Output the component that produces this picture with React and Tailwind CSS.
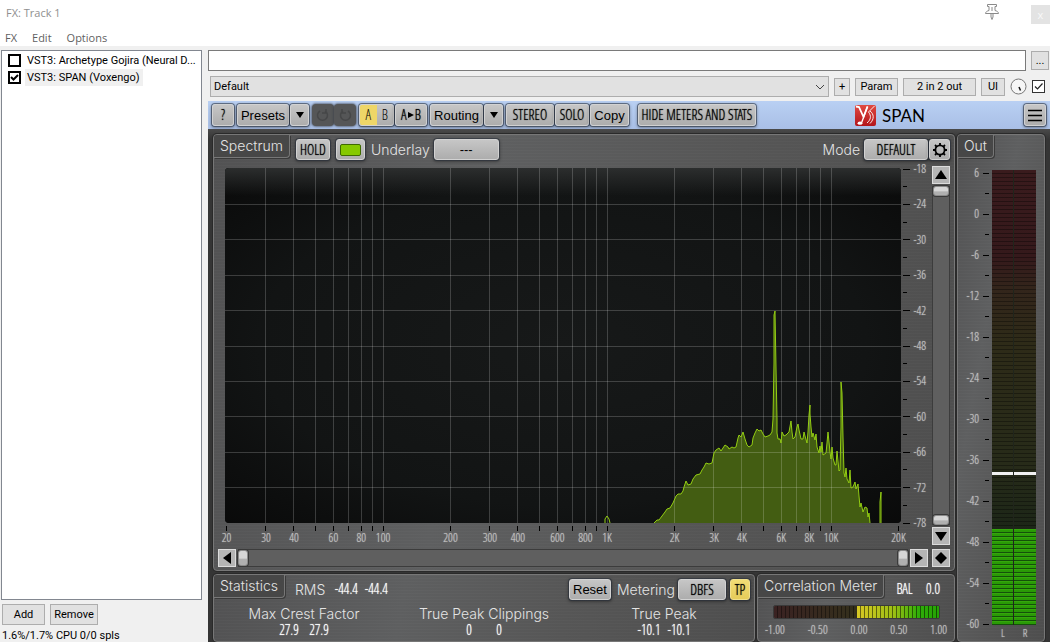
import React, { useState } from 'react';
import clsx from 'clsx';

// --- Scales ---
const PLOT_W = 676;
const PLOT_H = 355;
const freqX = (f) => 1.5 + 224 * Math.log10(f / 20);
const dbY = (db) => 1 + ((-18 - db) / 60) * 354;
const outY = (db) => 3 + ((6 - db) / 66) * 451;

const FREQS = [
  20, 30, 40, 50, 60, 70, 80, 90, 100, 200, 300, 400, 500, 600, 700, 800, 900,
  1000, 2000, 3000, 4000, 5000, 6000, 7000, 8000, 9000, 10000, 20000,
];
const FREQ_LABELS = {
  20: '20', 30: '30', 40: '40', 60: '60', 80: '80', 100: '100', 200: '200', 300: '300',
  400: '400', 600: '600', 800: '800', 1000: '1K', 2000: '2K', 3000: '3K', 4000: '4K',
  6000: '6K', 8000: '8K', 10000: '10K', 20000: '20K',
};
const DB_STEPS = Array.from({ length: 21 }, (_, i) => -18 - i * 3);
const OUT_STEPS = Array.from({ length: 23 }, (_, i) => 6 - i * 3);

const SPECTRUM =
  '429,355 432,352 434,352 437,348 440,344 442,341 445,340 448,335 451,328 453,326 456,326 458,323 459,319 461,313 463,317 466,316 468,311 471,307 475,306 477,302 479,299 481,295 484,296 487,295 489,285 491,282 494,280 496,283 498,280 500,277 503,279 504,281 507,279 509,280 511,279 513,270 514,267 516,269 518,264 520,271 522,277 524,279 527,277 528,270 530,265 532,261 534,263 536,262 538,266 540,269 543,268 545,267 547,264 548,251 549,195 549,147 550,143 551,200 552,251 552,265 553,271 555,271 556,275 557,264 559,268 561,267 564,264 566,253 567,264 568,271 570,269 572,259 573,256 574,262 576,271 578,271 579,264 580,268 582,275 583,264 584,247 585,237 585,246 586,259 587,269 588,265 590,272 591,266 592,279 594,285 595,278 596,284 597,274 598,287 601,285 602,275 603,264 605,284 606,291 607,279 608,290 610,297 611,297 612,283 614,303 615,302 616,259 616,214 617,225 618,269 619,305 620,309 621,300 622,311 624,315 625,302 626,320 628,319 630,314 631,321 633,316 634,328 635,339 636,335 638,344 640,339 642,340 643,349 644,345 645,355';

// --- Host window controls ---
const HostButton = ({ className, children, ...rest }) => (
  <button
    className={clsx(
      'flex items-center justify-center border border-[#adadad] bg-[#e1e1e1] text-[11px] leading-none text-black',
      className
    )}
    {...rest}
  >
    {children}
  </button>
);

const FxItem = ({ id, label, defaultChecked, selected }) => {
  const [on, setOn] = useState(defaultChecked);
  return (
    <li className="flex h-[17px] items-center gap-1">
      <span className="relative size-[13px] shrink-0">
        <input
          id={id}
          type="checkbox"
          checked={on}
          onChange={(e) => setOn(e.target.checked)}
          className="block size-[13px] appearance-none border-2 border-black bg-white"
        />
        {on && (
          <svg viewBox="0 0 13 13" className="pointer-events-none absolute inset-0 size-[13px]">
            <path d="M3 6 L5.5 8.5 L10 4" fill="none" stroke="#000" strokeWidth="2" />
          </svg>
        )}
      </span>
      <label htmlFor={id} className={clsx('truncate px-[2px] text-[11px] leading-[17px]', selected && 'bg-[#f0f0f0] pr-1')}>
        {label}
      </label>
    </li>
  );
};

// --- Plugin controls ---
const KEY = 'flex items-center justify-center rounded-[3px] border border-[#d2d2d2] bg-linear-to-b from-[#c6c6c6] to-[#adadad] text-black shadow-[0_0_0_1px_rgba(40,48,60,0.55),0_1px_3px_1px_rgba(0,0,0,0.35)]';
const NARROW = 'font-["Open_Sans_Condensed_Light","Open_Sans_Condensed","Roboto_Condensed","Liberation_Sans_Narrow",sans-serif] font-light [text-shadow:0_0_1px_currentColor]';
const LABEL = 'font-[Inter,"Liberation_Sans",sans-serif] font-light text-[14px] leading-4 text-[#e4e4e4]';
const METAL = 'bg-[repeating-linear-gradient(to_bottom,rgba(255,255,255,0.02)_0_1px,transparent_1px_3px),linear-gradient(100deg,#525253,#5e5f60_35%,#565656_65%,#4e4e4e)]';

const Key = ({ narrow, className, children, ...rest }) => (
  <button className={clsx(KEY, narrow ? [NARROW, 'text-[14px]'] : 'font-["Liberation_Sans",sans-serif] text-[13px]', 'leading-none whitespace-nowrap', className)} {...rest}>
    {children}
  </button>
);

const Triangle = ({ points }) => (
  <svg viewBox="0 0 14 14" className="size-[14px]">
    <polygon points={points} fill="#000" />
  </svg>
);

const ScrollKey = ({ points, label }) => (
  <button aria-label={label} className="flex size-[18px] shrink-0 items-center justify-center border border-[#dcdcdc] bg-[#b5b5b5]">
    <Triangle points={points} />
  </button>
);

const Panel = ({ title, head, className, children }) => (
  <section className={clsx('flex flex-col overflow-hidden rounded-[4px] border border-[#777] shadow-[0_0_0_1px_#2a2a2a]', METAL, className)}>
    <header className="flex items-start">
      <h2 className={clsx(LABEL, 'h-[23px] shrink-0 rounded-br-[4px] border-r border-b border-[#777] bg-[#474747] px-[6px] pt-[3px] shadow-[1px_1px_0_#3a3a3a]')}>{title}</h2>
      {head}
    </header>
    {children}
  </section>
);

const Thumb = ({ label, className }) => (
  <button aria-label={label} className={clsx('shrink-0 rounded-[3px] border border-[#8b8b8b] bg-linear-to-b from-[#d6d6d6] from-50% to-[#b0b0b0] to-60% shadow-[0_0_0_1px_#3a3a3a]', className)} />
);

const Toolbar = () => (
  <div className="flex h-[28px] items-center gap-[3px] bg-linear-to-b from-[#b9d0f3] to-[#a9bfe6] px-1">
    <Key narrow className="h-[22px] w-[22px]" aria-label="Help">?</Key>
    <div className="flex gap-px">
      <Key className="h-[22px] w-[52px]">Presets</Key>
      <Key className="h-[22px] w-[19px]" aria-label="Preset menu"><Triangle points="3,4 11,4 7,10" /></Key>
    </div>
    <div className="flex">
      {['M10 4 A5 5 0 1 1 5 4 M11 2 V6 H7', 'M6 4 A5 5 0 1 0 11 4 M5 2 V6 H9'].map((d, i) => (
        <button key={d} aria-label={i ? 'Redo' : 'Undo'} className="flex h-[22px] w-[22px] items-center justify-center rounded-[4px] bg-[#555657] shadow-[0_0_2px_1px_rgba(60,65,75,0.6)]">
          <svg viewBox="0 0 16 16" className="size-4"><path d={d} fill="none" stroke="#464748" strokeWidth="1.5" /></svg>
        </button>
      ))}
    </div>
    <div className="flex gap-px">
      <div className={clsx(KEY, NARROW, 'h-[22px] w-[35px] overflow-hidden text-[14px] leading-none')}>
        <button className="h-full flex-1 bg-[#eed668]">A</button>
        <button className="h-full flex-1">B</button>
      </div>
      <Key narrow className="h-[22px] w-[32px]" aria-label="Copy A to B">
        A<svg viewBox="0 0 8 8" className="size-2"><polygon points="1,1 7,4 1,7" /></svg>B
      </Key>
    </div>
    <div className="flex gap-px">
      <Key className="h-[22px] w-[53px]">Routing</Key>
      <Key className="h-[22px] w-[19px]" aria-label="Routing menu"><Triangle points="3,4 11,4 7,10" /></Key>
    </div>
    <div className="flex gap-px">
      <Key narrow className="h-[22px] w-[48px]">STEREO</Key>
      <Key narrow className="h-[22px] w-[34px]">SOLO</Key>
      <Key className="h-[22px] w-[39px]">Copy</Key>
    </div>
    <Key narrow className="ml-[6px] h-[22px] w-[118px]">HIDE METERS AND STATS</Key>
    <div className="flex flex-1 items-center justify-center gap-[6px]">
      <svg viewBox="0 0 21 21" className="size-[21px]">
        <defs>
          <linearGradient id="badge" x1="0" y1="0" x2="0" y2="1">
            <stop offset="0" stopColor="#e04a42" />
            <stop offset="1" stopColor="#b3151b" />
          </linearGradient>
        </defs>
        <rect width="21" height="21" rx="2" fill="url(#badge)" />
        <path d="M1 1.5 L4 2 L8.500 12 L12.500 1.500" fill="none" stroke="#fff" strokeWidth="1.8" />
        <path d="M12.500 1.500 L6.5 18" stroke="#fff" strokeWidth="1.3" />
        <ellipse cx="5" cy="18.2" rx="2.4" ry="1.6" fill="#fff" />
        <path d="M19.5 1 L13.500 7 C16.500 11 16 14.500 12 18 M15 6 C19 9 19.500 14 15 18.500" fill="none" stroke="#fff" strokeWidth="0.9" />
      </svg>
      <span className="font-[Lato,sans-serif] text-[17px] leading-none text-black">SPAN</span>
    </div>
    <Key className="h-[22px] w-[22px]" aria-label="Menu">
      <svg viewBox="0 0 16 16" className="size-4"><path d="M1 3.5H15M1 8.5H15M1 13.5H15" stroke="#000" strokeWidth="1.5" /></svg>
    </Key>
  </div>
);

const SpectrumPlot = () => (
  <svg
    viewBox={`0 0 ${PLOT_W} ${PLOT_H}`}
    preserveAspectRatio="none"
    className="h-[355px] min-w-0 flex-1 rounded-[4px] bg-[#131515]"
    role="img"
    aria-label="Spectrum"
  >
    <defs>
      <radialGradient id="vignette" cx="0.5" cy="0.5" r="0.75">
        <stop offset="0" stopColor="#171919" />
        <stop offset="0.6" stopColor="#121414" />
        <stop offset="1" stopColor="#080808" />
      </radialGradient>
      <linearGradient id="topglow" x1="0" y1="0" x2="0" y2="1">
        <stop offset="0" stopColor="#2c2e2e" />
        <stop offset="1" stopColor="#2c2e2e" stopOpacity="0" />
      </linearGradient>
    </defs>
    <rect width={PLOT_W} height={PLOT_H} fill="url(#vignette)" />
    <rect width={PLOT_W} height="28" fill="url(#topglow)" />
    <polygon points={SPECTRUM} fill="#435d12" />
    <g stroke="#fff" strokeOpacity="0.19" shapeRendering="crispEdges">
      {FREQS.slice(1, -1).map((f) => (
        <line key={f} x1={freqX(f)} x2={freqX(f)} y1="0" y2={PLOT_H} />
      ))}
      {DB_STEPS.filter((d) => d % 6 === 0 && d < -18 && d > -78).map((d) => (
        <line key={d} x1="0" x2={PLOT_W} y1={dbY(d)} y2={dbY(d)} />
      ))}
    </g>
    <g fill="none" stroke="#93cd12" strokeWidth="1" strokeLinejoin="round">
      <polyline points={SPECTRUM} />
      <polyline points="380,355 380,351 382,348 384,351 385,355" />
      <polyline points="655,355 655,334 656,324 656,355" />
    </g>
  </svg>
);

const SpectrumPanel = () => (
  <Panel
    title="Spectrum"
    head={
      <div className="flex h-[31px] flex-1 items-start pt-1 pr-1 pl-[6px]">
        <Key narrow className="h-[21px] w-[34px]">HOLD</Key>
        <Key className="ml-[6px] h-[21px] w-[29px]" aria-label="Underlay color">
          <span className="h-[12px] w-[21px] rounded-[2px] border border-[#3f6a00] bg-[#86c900]" />
        </Key>
        <span className={clsx(LABEL, 'ml-[6px] pt-[3px]')}>Underlay</span>
        <Key className="ml-1 h-[21px] w-[65px]">---</Key>
        <span className={clsx(LABEL, 'mr-1 ml-auto pt-[3px]')}>Mode</span>
        <Key narrow className="h-[21px] w-[64px]">DEFAULT</Key>
        <Key className="ml-px h-[21px] w-[21px]" aria-label="Settings">
          <svg viewBox="0 0 16 16" className="size-4">
            <circle cx="8" cy="8" r="4.6" fill="none" stroke="#000" strokeWidth="1.8" />
            <path d="M8 3.5V1M8 12.5V15M3.5 8H1M12.5 8H15M4.8 4.8L3 3M11.2 11.2L13 13M4.8 11.2L3 13M11.2 4.8L13 3" stroke="#000" strokeWidth="1.8" />
          </svg>
        </Key>
      </div>
    }
  >
    <div className="flex gap-1 px-1 pb-[3px]">
      <div className="flex min-w-0 flex-1 flex-col">
        <div className="flex pt-[2px] pl-[7px]">
          <SpectrumPlot />
          <div className="relative w-[27px] shrink-0">
            {DB_STEPS.map((d) => (
              <div key={d} className="absolute inset-x-0 flex h-0 items-center pl-[2px]" style={{ top: dbY(d) }}>
                <span className={clsx('h-px bg-black', d % 6 === 0 ? 'w-[7px]' : 'w-[4px]')} />
                {d % 6 === 0 && <span className={clsx(NARROW, 'ml-auto pr-[2px] text-[12px] leading-none text-[#c2c2c2]')}>{d}</span>}
              </div>
            ))}
          </div>
        </div>
        <div className="mr-[27px] ml-[7px] h-[26px]">
          <div className="relative h-full">
            {FREQS.map((f) => (
              <div key={f} className="absolute top-[3px] flex w-0 flex-col items-center" style={{ left: `${(freqX(f) / PLOT_W) * 100}%` }}>
                <span className="h-[5px] w-px bg-black" />
                {FREQ_LABELS[f] && <span className={clsx(NARROW, 'mt-px text-[12px] leading-3 text-[#c2c2c2]')}>{FREQ_LABELS[f]}</span>}
              </div>
            ))}
          </div>
        </div>
        <div className="flex gap-[2px]">
          <ScrollKey label="Scroll left" points="11,1 11,13 3,7" />
          <div className="flex flex-1 justify-between border-y border-[#3c3c3c] bg-[#5f5f5f]">
            <Thumb label="Range start" className="h-[16px] w-[10px]" />
            <Thumb label="Range end" className="h-[16px] w-[10px]" />
          </div>
          <ScrollKey label="Scroll right" points="3,1 3,13 11,7" />
        </div>
      </div>
      <div className="flex w-[18px] flex-col">
        <ScrollKey label="Scroll up" points="1,11 13,11 7,2" />
        <div className="my-[2px] flex flex-1 flex-col justify-between border-x border-[#3c3c3c] bg-[#5f5f5f]">
          <Thumb label="Range top" className="h-[10px] w-[16px]" />
          <Thumb label="Range bottom" className="h-[10px] w-[16px]" />
        </div>
        <ScrollKey label="Scroll down" points="1,3 13,3 7,12" />
        <div className="pt-1">
          <ScrollKey label="Reset range" points="7,1 13,7 7,13 1,7" />
        </div>
      </div>
    </div>
  </Panel>
);

const STATS = [
  { name: 'Max Crest Factor', l: '27.9', r: '27.9' },
  { name: 'True Peak Clippings', l: '0', r: '0' },
  { name: 'True Peak', l: '-10.1', r: '-10.1' },
];

const VALUE = 'text-[14px] leading-[14px] text-white';

const StatsPanel = () => (
  <Panel
    title="Statistics"
    className="min-w-0 flex-1"
    head={
      <div className="flex h-[31px] flex-1 items-start pt-1 pr-1 pl-[10px]">
        <span className={clsx(LABEL, 'pt-[3px]')}>RMS</span>
        <span className={clsx(NARROW, VALUE, 'flex pt-[3px] pl-[6px] text-center')}>
          <span className="w-[30px]">-44.4</span>
          <span className="w-[30px]">-44.4</span>
        </span>
        <Key className="ml-auto h-[21px] w-[42px]">Reset</Key>
        <span className={clsx(LABEL, 'mr-[3px] ml-[6px] pt-[3px]')}>Metering</span>
        <Key narrow className="h-[21px] w-[48px]">DBFS</Key>
        <Key narrow className="ml-1 h-[21px] w-[20px] border-[#f0e08e] from-[#f2dd75] to-[#e6cc5a]">TP</Key>
      </div>
    }
  >
    <dl className="grid grid-cols-3 text-center">
      {STATS.map((s) => (
        <div key={s.name} className="flex flex-col gap-px">
          <dt className={clsx(LABEL, 'whitespace-nowrap')}>{s.name}</dt>
          <dd className={clsx(NARROW, VALUE, 'flex justify-center')}>
            <span className="w-[30px]">{s.l}</span>
            <span className="w-[30px]">{s.r}</span>
          </dd>
        </div>
      ))}
    </dl>
  </Panel>
);

const CorrelationPanel = () => (
  <Panel
    title="Correlation Meter"
    className="w-[198px]"
    head={
      <div className={clsx(NARROW, VALUE, 'flex h-[30px] flex-1 justify-between pt-[7px] pr-[14px] pl-[12px]')}>
        <span>BAL</span>
        <span>0.0</span>
      </div>
    }
  >
    <div className="mr-[14px] ml-[15px] flex h-[14px] shrink-0 overflow-hidden rounded-[2px] border border-[#3a3a3a]">
      <div className="flex-1 bg-[repeating-linear-gradient(to_right,transparent_0_3px,rgba(0,0,0,0.4)_3px_4px),linear-gradient(to_right,#3a2222,#34301c)]" />
      <div className="flex-1 bg-[repeating-linear-gradient(to_right,transparent_0_3px,rgba(0,0,0,0.5)_3px_4px),linear-gradient(to_right,#d8c824,#9cbf14_45%,#2fae08_75%,#25a305)]" />
    </div>
    <div className={clsx(NARROW, 'mx-[7px] flex justify-between pt-[5px] text-[12px] leading-3 text-[#c2c2c2]')}>
      {['-1.00', '-0.50', '0.00', '0.50', '1.00'].map((t) => (
        <span key={t}>{t}</span>
      ))}
    </div>
  </Panel>
);

const OutPanel = () => (
  <Panel title="Out" className="w-[88px]">
    <div className="flex flex-1 pt-3 pr-[8px]">
      <div className="relative h-[455px] flex-1">
        {OUT_STEPS.map((d) => (
          <div key={d} className="absolute inset-x-0 flex h-0 items-center justify-end pr-[3px]" style={{ top: outY(d) }}>
            {d % 6 === 0 && <span className={clsx(NARROW, 'pr-[4px] text-[12px] leading-none text-[#c2c2c2]')}>{d}</span>}
            <span className={clsx('h-px bg-black', d % 6 === 0 ? 'w-[6px]' : 'w-[4px]')} />
          </div>
        ))}
      </div>
      <div className="grid w-[44px] grid-cols-2 content-start">
        {['L', 'R'].map((ch) => (
          <div key={ch}>
            <div className={clsx(
              'relative flex h-[455px] flex-col justify-end bg-[repeating-linear-gradient(to_bottom,transparent_0_3px,rgba(0,0,0,0.35)_3px_4px),linear-gradient(to_bottom,#3a1b1d,#35191b_19%,#33251b_26%,#2e2b18_38%,#272b19_65%,#1a2517_82%)]',
              ch === 'L' && 'border-r border-[#20251c]'
            )}>
              <div className="absolute inset-x-0 top-[302px] h-[3px] bg-[#f2f2f2]" />
              <div className="h-[96px] bg-[repeating-linear-gradient(to_bottom,#35a60c_0_1px,#2a9a06_1px_3px,#14500a_3px_4px)]" />
            </div>
            <div className={clsx(NARROW, 'pt-px text-center text-[11px] leading-[14px] text-[#c2c2c2]')}>{ch}</div>
          </div>
        ))}
      </div>
    </div>
  </Panel>
);

const App = () => (
  <div className='flex min-h-screen flex-col bg-[#f0f0f0] font-[Roboto,"Liberation_Sans",sans-serif] text-[11px] text-black'>
    {/* Title bar and menu */}
    <div className='bg-white font-["Open_Sans","Noto_Sans",sans-serif]'>
      <div className="flex h-[28px] items-start justify-between pl-[6px]">
        <h1 className="pt-[5px] text-[11px] leading-4 text-[#8f8f8f]">FX: Track 1</h1>
        <div className="flex items-start gap-[31px]">
          <button aria-label="Pin window" className="pt-[3px]">
            <svg viewBox="0 0 16 18" className="h-[18px] w-[16px]" fill="none" stroke="#8a8a8a">
              <path d="M3.5 1.5H12.5V3.5H11V7.5C13 8 14.5 9 14.5 10.5H1.5C1.5 9 3 8 5 7.5V3.5H3.5ZM7 10.5V14L8 16.5L9 14V10.5M8 4V8" />
            </svg>
          </button>
          <button aria-label="Close" className="mt-[5px] h-[19px] w-[19px] bg-[#e3e3e3] text-[11px] leading-none text-[#f8f8f8]">x</button>
        </div>
      </div>
      <nav className="flex h-[18px] gap-[15px] pl-[5px] text-[11px] leading-5 text-[#5f5f5f]">
        <button className="h-5">FX</button>
        <button className="h-5">Edit</button>
        <button className="h-5">Options</button>
      </nav>
    </div>

    <div className="flex flex-1 gap-[6px] pt-1 pl-px">
      {/* FX chain */}
      <aside className="flex w-[201px] shrink-0 flex-col">
        <ul className="flex-1 border border-[#828790] bg-white pt-px pr-[3px] pl-[6px]">
          <FxItem id="fx-gojira" label="VST3: Archetype Gojira (Neural D..." />
          <FxItem id="fx-span" label="VST3: SPAN (Voxengo)" defaultChecked selected />
        </ul>
        <div className="flex gap-[5px] pt-1 pl-px">
          <HostButton className="h-[21px] w-[43px]">Add</HostButton>
          <HostButton className="h-[21px] w-[48px]">Remove</HostButton>
        </div>
        <p className="h-[17px] pt-1 pl-px text-[11px] leading-[14px]">1.6%/1.7% CPU 0/0 spls</p>
      </aside>

      <main className="flex min-w-0 flex-1 flex-col">
        <div className="flex items-center gap-[5px] pr-px">
          <input aria-label="Comment" className="h-[21px] min-w-0 flex-1 border border-[#7a7a7a] bg-white px-1 outline-none" />
          <HostButton className="h-[19px] w-[18px]" aria-label="Browse">...</HostButton>
        </div>
        <div className="flex items-center gap-[5px] pt-[5px] pr-[5px] pb-1 pl-[2px]">
          <div className="relative min-w-0 flex-1">
            <select aria-label="Preset" className="block h-[21px] w-full appearance-none border border-[#adadad] bg-[#e1e1e1] pt-px pr-5 pl-[3px] text-[11px]">
              <option>Default</option>
            </select>
            <svg viewBox="0 0 10 6" className="pointer-events-none absolute top-[8px] right-1 h-[6px] w-[10px]">
              <path d="M1 1L5 5L9 1" fill="none" stroke="#444" />
            </svg>
          </div>
          <HostButton className="h-[18px] w-[16px]">+</HostButton>
          <HostButton className="h-[18px] w-[43px]">Param</HostButton>
          <HostButton className="h-[18px] w-[73px]">2 in 2 out</HostButton>
          <HostButton className="h-[18px] w-[24px]">UI</HostButton>
          <button aria-label="Wet mix">
            <svg viewBox="0 0 17 17" className="size-[17px]">
              <circle cx="8.5" cy="8.5" r="7.5" fill="#f6f6f6" stroke="#777" />
              <path d="M9 9L10.5 12.5" stroke="#111" strokeWidth="1.5" />
            </svg>
          </button>
          <span className="relative size-[13px]">
            <input type="checkbox" defaultChecked aria-label="Enable effect" className="peer block size-[13px] appearance-none border border-[#333] bg-white" />
            <svg viewBox="0 0 13 13" className="pointer-events-none absolute inset-0 hidden size-[13px] peer-checked:block">
              <path d="M3 6.5L5.5 9L10.5 3.5" fill="none" stroke="#222" strokeWidth="1.2" />
            </svg>
          </span>
        </div>

        {/* Plugin */}
        <div className="flex flex-1 flex-col">
          <Toolbar />
          <div className="flex flex-1 gap-[2px] bg-linear-to-b from-[#4a4a4a] to-[#353535] to-2% px-[5px] pt-[5px]">
            <div className="flex min-w-0 flex-1 flex-col gap-[3px]">
              <SpectrumPanel />
              <div className="flex flex-1 gap-[2px]">
                <StatsPanel />
                <CorrelationPanel />
              </div>
            </div>
            <OutPanel />
          </div>
        </div>
      </main>
    </div>
  </div>
);

export default App;
